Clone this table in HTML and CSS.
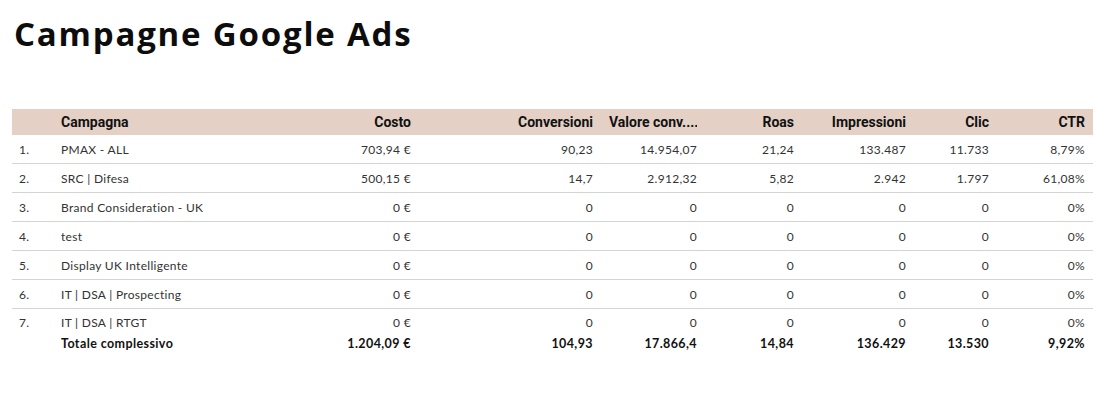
FILE: index.html
```html
<!DOCTYPE html>
<html lang="it">
<head>
<meta charset="utf-8">
<title>Campagne Google Ads</title>
<link rel="stylesheet" href="styles.css">
</head>
<body>
<div class="page">
  <h1 class="title">Campagne Google Ads</h1>
  <table class="grid">
    <colgroup>
      <col class="c-idx"><col class="c-name"><col class="c-cost"><col class="c-conv"><col class="c-val"><col class="c-roas"><col class="c-imp"><col class="c-clic"><col class="c-ctr">
    </colgroup>
    <thead>
      <tr>
        <th></th>
        <th class="left">Campagna</th>
        <th>Costo</th>
        <th>Conversioni</th>
        <th><span class="trunc">Valore conv....</span></th>
        <th>Roas</th>
        <th>Impressioni</th>
        <th>Clic</th>
        <th>CTR</th>
      </tr>
    </thead>
    <tbody>
      <tr><td class="idx">1.</td><td class="left">PMAX - ALL</td><td>703,94 €</td><td>90,23</td><td>14.954,07</td><td>21,24</td><td>133.487</td><td>11.733</td><td>8,79%</td></tr>
      <tr><td class="idx">2.</td><td class="left">SRC | Difesa</td><td>500,15 €</td><td>14,7</td><td>2.912,32</td><td>5,82</td><td>2.942</td><td>1.797</td><td>61,08%</td></tr>
      <tr><td class="idx">3.</td><td class="left">Brand Consideration - UK</td><td>0 €</td><td>0</td><td>0</td><td>0</td><td>0</td><td>0</td><td>0%</td></tr>
      <tr><td class="idx">4.</td><td class="left">test</td><td>0 €</td><td>0</td><td>0</td><td>0</td><td>0</td><td>0</td><td>0%</td></tr>
      <tr><td class="idx">5.</td><td class="left">Display UK Intelligente</td><td>0 €</td><td>0</td><td>0</td><td>0</td><td>0</td><td>0</td><td>0%</td></tr>
      <tr><td class="idx">6.</td><td class="left">IT | DSA | Prospecting</td><td>0 €</td><td>0</td><td>0</td><td>0</td><td>0</td><td>0</td><td>0%</td></tr>
      <tr class="last"><td class="idx">7.</td><td class="left">IT | DSA | RTGT</td><td>0 €</td><td>0</td><td>0</td><td>0</td><td>0</td><td>0</td><td>0%</td></tr>
    </tbody>
    <tfoot>
      <tr><td></td><td class="left">Totale complessivo</td><td>1.204,09 €</td><td>104,93</td><td>17.866,4</td><td>14,84</td><td>136.429</td><td>13.530</td><td>9,92%</td></tr>
    </tfoot>
  </table>
</div>
</body>
</html>
```

FILE: styles.css
```css
html, body {
  margin: 0;
  padding: 0;
  background: #ffffff;
}

.page {
  padding: 14px 0 0 12px;
}

.title {
  margin: 0 0 0 2px;
  font-family: "Open Sans", "Lato", sans-serif;
  font-weight: 700;
  font-size: 33px;
  line-height: 40px;
  color: #0d0d0d;
  letter-spacing: 1.8px;
}

.grid {
  margin-top: 55px;
  width: 1081px;
  table-layout: fixed;
  border-collapse: separate;
  border-spacing: 0;
}

.c-idx { width: 41px; }
.c-name { width: 247px; }
.c-cost { width: 119px; }
.c-conv { width: 182px; }
.c-val { width: 104px; }
.c-roas { width: 97px; }
.c-imp { width: 112px; }
.c-clic { width: 83px; }
.c-ctr { width: 96px; }

.grid th {
  background: #e4d0c5;
  height: 26px;
  padding: 0 8px;
  font-family: "Roboto", sans-serif;
  font-weight: 700;
  font-size: 14px;
  color: #111111;
  text-align: right;
  white-space: nowrap;
  overflow: hidden;
}

.grid th.left,
.grid td.left {
  text-align: left;
}

.trunc {
  display: block;
  overflow: hidden;
  text-overflow: clip;
  text-align: left;
}

.grid tbody td {
  height: 28px;
  padding: 0 8px;
  border-bottom: 1px solid #d4d4d4;
  font-family: "Lato", sans-serif;
  font-weight: 400;
  font-size: 12px;
  letter-spacing: 0.3px;
  color: #333333;
  text-align: right;
  white-space: nowrap;
}

.grid tbody tr.last td {
  border-bottom: none;
  height: 26px;
}

.grid td.idx {
  text-align: left;
  padding-left: 7px;
}

.grid tfoot td {
  height: 16px;
  padding: 0 8px;
  font-family: "Lato", sans-serif;
  font-weight: 700;
  font-size: 12.5px;
  letter-spacing: 0.4px;
  color: #111111;
  text-align: right;
  white-space: nowrap;
}
```
